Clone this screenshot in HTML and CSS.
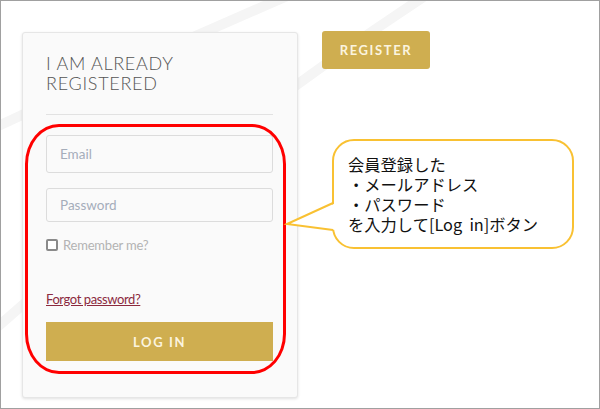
FILE: index.html
```html
<!DOCTYPE html>
<html lang="ja">
<head>
    <meta charset="UTF-8">
    <meta name="viewport" content="width=device-width, initial-scale=1.0">
    <title>Login</title>
    <link rel="stylesheet" href="styles.css">
</head>
<body>
    <div class="screen">
        <svg class="swoosh" width="600" height="409" viewBox="0 0 600 409">
            <path d="M292 -6 Q150 55 -6 128" />
            <path d="M428 -6 Q220 130 -6 330" />
        </svg>

        <div class="page">
            <div class="login-card">
                <h2 class="card-title">I AM ALREADY<br>REGISTERED</h2>
                <div class="divider"></div>
                <form class="login-form">
                    <input class="field field-email" type="text" placeholder="Email">
                    <input class="field field-password" type="password" placeholder="Password">
                    <label class="remember">
                        <span class="checkbox"></span>
                        Remember me?
                    </label>
                    <a class="forgot" href="#">Forgot password?</a>
                    <button class="btn btn-login" type="button">LOG IN</button>
                </form>
            </div>
            <button class="btn btn-register" type="button">REGISTER</button>
        </div>

        <div class="highlight"></div>

        <svg class="bubble-tail" width="56" height="45" viewBox="0 0 56 45">
            <polygon points="56,8 7,29 56,35" fill="#fff" />
            <polyline points="53,8 7,29 53,35" fill="none" stroke="#f9c132" stroke-width="2" />
        </svg>
        <div class="bubble">
            <div class="bubble-line">会員登録した</div>
            <div class="bubble-line">・メールアドレス</div>
            <div class="bubble-line">・パスワード</div>
            <div class="bubble-line">を入力して[Log&nbsp; in]ボタン</div>
        </div>
    </div>
</body>
</html>
```

FILE: styles.css
```css
body {
    margin: 0;
    background-color: #ffffff;
    font-family: Lato, "Noto Sans", sans-serif;
}

.screen {
    position: relative;
    width: 600px;
    height: 409px;
    box-sizing: border-box;
    border: 1px solid #a0a0a0;
    overflow: hidden;
    background-color: #ffffff;
}

.swoosh {
    position: absolute;
    top: -1px;
    left: -1px;
}

.swoosh path {
    fill: none;
    stroke: #f5f5f5;
    stroke-width: 10;
}

.page {
    position: relative;
    display: flex;
    align-items: flex-start;
    gap: 24px;
    padding: 31px 0 0 21px;
}

.login-card {
    width: 276px;
    box-sizing: border-box;
    padding: 20px 24px 36px 23px;
    background-color: #fafafa;
    border: 1px solid #e6e6e6;
    border-radius: 3px;
    box-shadow: 0 1px 3px rgba(0, 0, 0, 0.12);
}

.card-title {
    margin: 0;
    font-size: 18px;
    font-weight: 300;
    line-height: 20px;
    letter-spacing: 0.7px;
    color: #555555;
}

.divider {
    height: 1px;
    margin-top: 21px;
    background-color: #e2e2e2;
}

.login-form {
    display: flex;
    flex-direction: column;
    margin-top: 20px;
}

.field {
    box-sizing: border-box;
    width: 100%;
    padding: 0 13px;
    border: 1px solid #dcdcdc;
    border-radius: 3px;
    background-color: #fafafa;
    font-family: Lato, sans-serif;
    font-size: 13.5px;
    color: #555;
    outline: none;
}

.field::placeholder {
    color: #a5adba;
}

.field-email {
    height: 38px;
}

.field-password {
    height: 34px;
    margin-top: 15px;
}

.remember {
    display: flex;
    align-items: center;
    gap: 5px;
    height: 16px;
    margin-top: 15px;
    font-size: 13px;
    letter-spacing: -0.2px;
    color: #b3b3b3;
}

.checkbox {
    width: 8px;
    height: 8px;
    border: 2px solid #8a8a8a;
    border-radius: 2px;
    background-color: #ffffff;
}

.forgot {
    align-self: flex-start;
    margin-top: 37px;
    font-size: 13px;
    line-height: 18px;
    letter-spacing: -0.4px;
    color: #8c2a3e;
    text-decoration: underline;
}

.btn {
    border: none;
    background-color: #cfae50;
    color: #fbf4df;
    font-family: Lato, sans-serif;
    font-size: 13px;
    font-weight: 700;
    letter-spacing: 1.6px;
    cursor: pointer;
}

.btn-login {
    height: 39px;
    margin-top: 14px;
}

.btn-register {
    width: 108px;
    height: 38px;
    margin-top: -1px;
    border-radius: 3px;
}

.highlight {
    position: absolute;
    left: 24px;
    top: 123px;
    width: 255px;
    height: 244px;
    border: 3px solid #ff0000;
    border-radius: 34px / 40px;
}

.bubble-tail {
    position: absolute;
    left: 279px;
    top: 194px;
    z-index: 2;
}

.bubble {
    position: absolute;
    left: 331px;
    top: 138px;
    width: 242px;
    height: 110px;
    box-sizing: border-box;
    padding: 13px 0 0 14px;
    border: 2px solid #f9c132;
    border-radius: 22px;
    background-color: #ffffff;
    font-family: "Noto Sans CJK JP", sans-serif;
    font-size: 16.3px;
    color: #111111;
}

.bubble-line {
    height: 20px;
    line-height: 20px;
    white-space: nowrap;
}
```
